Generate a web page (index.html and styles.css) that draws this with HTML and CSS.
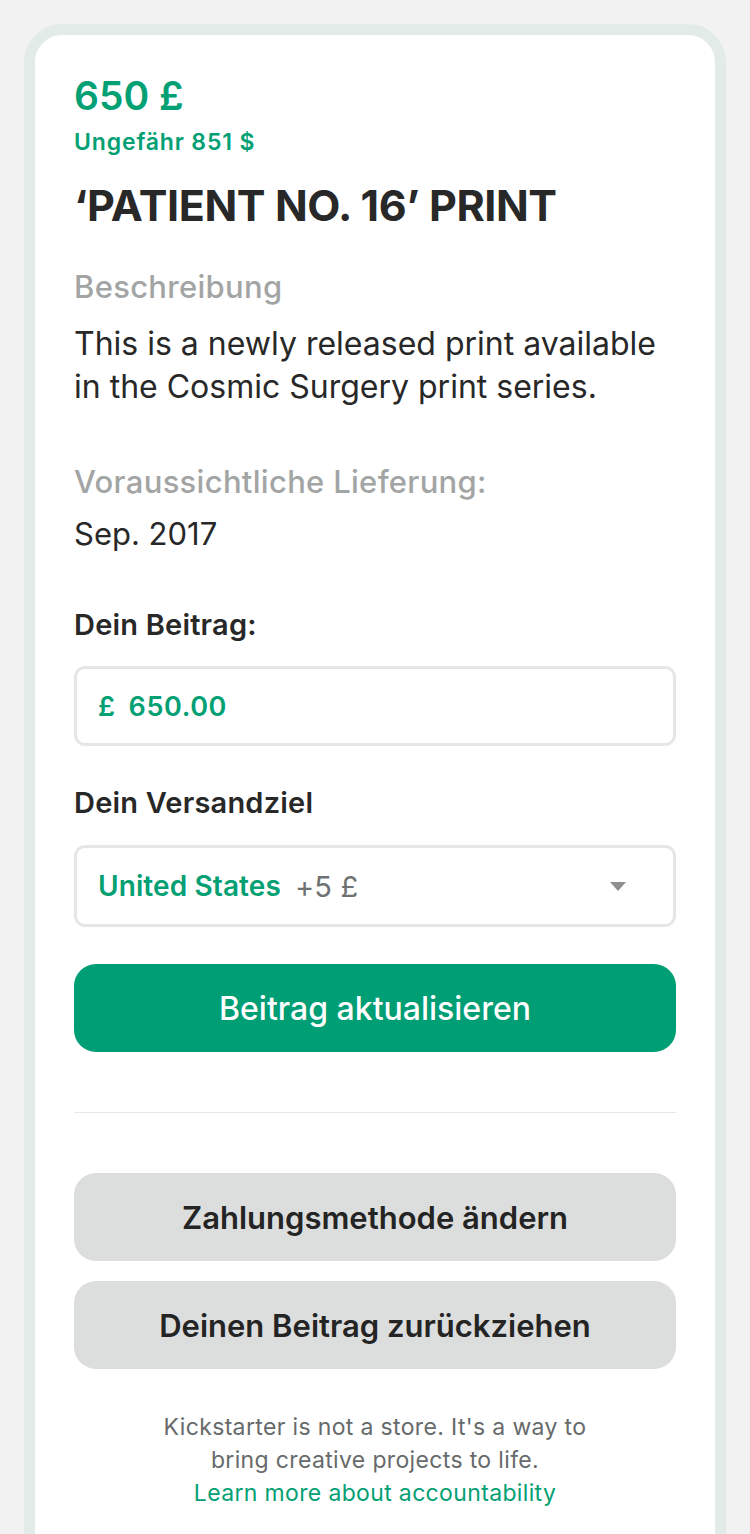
FILE: index.html
```html
<!DOCTYPE html>
<html lang="de">
<head>
<meta charset="utf-8">
<title>Beitrag</title>
<link rel="stylesheet" href="styles.css">
</head>
<body>
<main class="card">
  <div class="price">650 £</div>
  <div class="approx">Ungefähr 851 $</div>
  <h1 class="title">‘PATIENT NO. 16’ PRINT</h1>
  <div class="label label-desc">Beschreibung</div>
  <p class="body-text">This is a newly released print available in the Cosmic Surgery print series.</p>
  <div class="label label-delivery">Voraussichtliche Lieferung:</div>
  <p class="body-text date">Sep. 2017</p>

  <div class="field-label field-label-amount">Dein Beitrag:</div>
  <div class="input">
    <span class="currency">£</span>
    <span class="amount">650.00</span>
  </div>

  <div class="field-label field-label-ship">Dein Versandziel</div>
  <div class="select">
    <span class="country">United States</span>
    <span class="extra">+5 £</span>
    <svg class="caret" width="16" height="9" viewBox="0 0 16 9"><path d="M0 0H16L8 9Z" fill="#8e8e8e"/></svg>
  </div>

  <button class="btn btn-primary">Beitrag aktualisieren</button>
  <hr class="divider">
  <button class="btn btn-secondary btn-first">Zahlungsmethode ändern</button>
  <button class="btn btn-secondary btn-second">Deinen Beitrag zurückziehen</button>

  <p class="footer">Kickstarter is not a store. It's a way to<br>bring creative projects to life.<br><a class="footer-link" href="#">Learn more about accountability</a></p>
</main>
</body>
</html>
```

FILE: styles.css
```css
html, body {
  margin: 0;
  padding: 0;
}
body {
  background: #f2f2f2;
  font-family: Inter, "Noto Sans", sans-serif;
  color: #282828;
  padding: 24px 24px 0 24px;
  overflow: hidden;
}
.card {
  background: #ffffff;
  border: 11px solid #e3ebe9;
  border-radius: 38px;
  padding: 37px 39px 80px 39px;
  box-sizing: border-box;
  width: 702px;
}
.price {
  font-size: 39px;
  line-height: 48px;
  font-weight: 600;
  color: #03a074;
}
.approx {
  margin-top: 9px;
  font-size: 23px;
  line-height: 26px;
  font-weight: 600;
  letter-spacing: 0.85px;
  color: #03a074;
}
.title {
  margin: 23px 0 0 0;
  font-size: 43px;
  line-height: 54px;
  font-weight: 700;
  color: #282828;
  letter-spacing: -0.4px;
}
.label {
  font-size: 31px;
  line-height: 36px;
  font-weight: 500;
  letter-spacing: 0.3px;
  color: #a3a5a5;
}
.label-desc { margin-top: 37px; }
.label-delivery { margin-top: 56px; }
.body-text {
  margin: 17px 0 0 0;
  font-size: 32px;
  line-height: 43px;
  font-weight: 400;
  color: #282828;
}
.body-text.date { margin-top: 12px; font-size: 31px; }
.field-label {
  font-size: 29px;
  line-height: 34px;
  font-weight: 600;
  letter-spacing: 0.2px;
  color: #282828;
}
.field-label-amount { margin-top: 53px; }
.field-label-ship { margin-top: 40px; }
.input, .select {
  box-sizing: border-box;
  border: 3px solid #e6e6e6;
  border-radius: 11px;
  display: flex;
  align-items: center;
  padding: 0 21px;
  font-size: 27px;
  font-weight: 600;
}
.input {
  margin-top: 24px;
  height: 80px;
  gap: 13px;
  color: #03a074;
  letter-spacing: 0.6px;
}
.select {
  margin-top: 25px;
  height: 82px;
  gap: 14px;
  padding-right: 47px;
  font-size: 28px;
}
.country { color: #03a074; letter-spacing: 0.1px; }
.extra { color: #6f7272; font-weight: 400; font-size: 29px; letter-spacing: 0.2px; }
.caret { margin-left: auto; }
.btn {
  display: block;
  width: 100%;
  height: 88px;
  border: none;
  border-radius: 22px;
  font-family: inherit;
  font-size: 31px;
  cursor: pointer;
}
.btn-primary {
  margin-top: 37px;
  background: #009e74;
  color: #ffffff;
  font-weight: 500;
  font-size: 32px;
}
.divider {
  margin: 60px 0 0 0;
  border: none;
  height: 1px;
  background: #e6e6e6;
}
.btn-secondary {
  background: #dcdedd;
  color: #242424;
  font-weight: 600;
}
.btn-first { margin-top: 60px; }
.btn-second { margin-top: 20px; }
.footer {
  margin: 42px 0 0 0;
  text-align: center;
  font-size: 23px;
  line-height: 33px;
  letter-spacing: 0.35px;
  color: #676a6a;
}
.footer-link {
  color: #03a074;
  text-decoration: none;
}
```
